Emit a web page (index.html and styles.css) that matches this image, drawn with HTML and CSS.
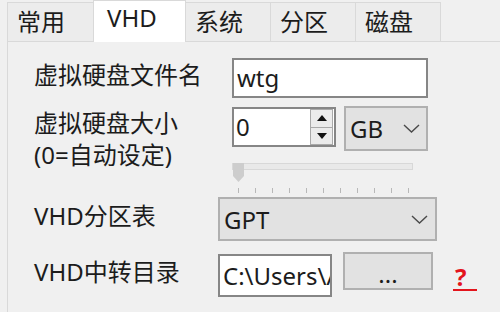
FILE: index.html
```html
<!DOCTYPE html>
<html>
<head>
<meta charset="utf-8">
<link rel="stylesheet" href="styles.css">
</head>
<body>
<div class="tabs">
  <div class="tab first">常用</div>
  <div class="tab active">VHD</div>
  <div class="tab">系统</div>
  <div class="tab">分区</div>
  <div class="tab">磁盘</div>
</div>
<div class="panel">
  <div class="group g1">
    <div class="row r1">
      <div class="label">虚拟硬盘文件名</div>
      <div class="textbox name">wtg</div>
    </div>
    <div class="row r2">
      <div class="label multi">虚拟硬盘大小<br>(0=自动设定)</div>
      <div class="ctrls">
        <div class="size-line">
          <div class="spin">
            <span class="val">0</span>
            <div class="spin-btns">
              <div class="sb"><svg width="10" height="6" viewBox="0 0 10 6"><path d="M0 6 L5 0 L10 6 Z" fill="#111"/></svg></div>
              <div class="sb"><svg width="10" height="6" viewBox="0 0 10 6"><path d="M0 0 L5 6 L10 0 Z" fill="#111"/></svg></div>
            </div>
          </div>
          <div class="combo unit">
            <span>GB</span>
            <svg class="chev" width="17" height="9" viewBox="0 0 17 9"><polyline points="1,1 8.5,8 16,1" fill="none" stroke="#4a4a4a" stroke-width="1.4"/></svg>
          </div>
        </div>
        <div class="slider">
          <div class="slider-body">
            <div class="track"></div>
            <svg class="thumb" width="11" height="19" viewBox="0 0 11 19"><path d="M0 0 H11 V13 L5.5 19 L0 13 Z" fill="#cdcdcd"/></svg>
          </div>
          <div class="ticks">
            <i></i><i></i><i></i><i></i><i></i><i></i><i></i><i></i><i></i><i></i><i></i>
          </div>
        </div>
      </div>
    </div>
  </div>
  <div class="group g2">
    <div class="row r3">
      <div class="label">VHD分区表</div>
      <div class="combo scheme">
        <span>GPT</span>
        <svg class="chev" width="17" height="9" viewBox="0 0 17 9"><polyline points="1,1 8.5,8 16,1" fill="none" stroke="#4a4a4a" stroke-width="1.4"/></svg>
      </div>
    </div>
    <div class="row r4">
      <div class="label">VHD中转目录</div>
      <div class="textbox path">C:\Users\Admin\AppData\Local\Temp</div>
      <div class="button">...</div>
      <a class="help">?</a>
    </div>
  </div>
</div>
</body>
</html>
```
FILE: styles.css
```css
* { box-sizing: border-box; }
html, body { margin: 0; padding: 0; }
body {
  width: 500px;
  height: 312px;
  overflow: hidden;
  background: #f0f0f0;
  font-family: "Noto Sans", "Noto Sans CJK SC", sans-serif;
  font-size: 24px;
  color: #1c1c1c;
}

/* tabs */
.tabs {
  display: flex;
  align-items: flex-end;
  height: 41px;
  padding-left: 7px;
  position: relative;
  z-index: 1;
}
.tab {
  width: 86px;
  height: 39px;
  margin-left: -1px;
  border: 1px solid #d9d9d9;
  border-bottom: none;
  background: #ececec;
  padding-left: 9px;
  line-height: 38px;
  white-space: nowrap;
}
.tab.first { margin-left: 0; width: 87px; }
.tab.active {
  width: 93px;
  height: 42px;
  margin-bottom: -1px;
  background: #ffffff;
  padding-left: 13px;
  line-height: 34px;
  position: relative;
  z-index: 2;
}

/* panel */
.panel {
  margin-left: 7px;
  height: 271px;
  border-top: 1px solid #d9d9d9;
  border-left: 1px solid #d9d9d9;
  background: #f0f0f0;
  padding: 16px 0 0 26px;
}
.row { display: flex; }
.label { white-space: nowrap; line-height: 32px; }

.g1 .label { width: 198px; flex: none; }
.g2 .label { width: 184px; flex: none; }

.r1 { align-items: center; }
.r1 .label { padding-bottom: 6px; }

.textbox {
  background: #fff;
  border: 2px solid #868686;
  padding-left: 3px;
  white-space: nowrap;
  overflow: hidden;
}
.textbox.name { width: 196px; height: 40px; line-height: 36px; }

.r2 { margin-top: 8px; align-items: flex-start; }
.r2 .label { padding-top: 1px; }
.ctrls { display: flex; flex-direction: column; }
.size-line { display: flex; align-items: flex-start; height: 45px; }

.spin {
  display: flex;
  width: 104px;
  height: 40px;
  margin-top: 1px;
  background: #fff;
  border: 2px solid #868686;
}
.spin .val { flex: 1; padding-left: 2px; line-height: 36px; }
.spin-btns {
  display: flex;
  flex-direction: column;
  width: 23px;
  margin-right: 1px;
}
.sb {
  flex: 1;
  display: flex;
  align-items: center;
  justify-content: center;
  background: #ebebeb;
  border: 1px solid #a9a9a9;
}
.sb + .sb { border-top: none; }

.combo {
  display: flex;
  align-items: center;
  justify-content: space-between;
  background: #e2e2e2;
  border: 2px solid #b0b0b0;
  white-space: nowrap;
}
.combo.unit {
  width: 84px;
  height: 45px;
  margin-left: 8px;
  padding: 0 6px 0 4px;
}
.combo.scheme {
  width: 219px;
  height: 44px;
  padding: 0 7px 0 4px;
}

/* slider */
.slider { padding-top: 6px; }
.slider-body { position: relative; height: 19px; width: 181px; }
.track {
  margin-top: 6px;
  height: 7px;
  width: 181px;
  background: #e9e9e9;
  border: 1px solid #d8d8d8;
}
.thumb { position: absolute; left: 1px; top: 0; }
.ticks {
  display: flex;
  gap: 16px;
  margin-top: 6px;
  padding-left: 6px;
  height: 5px;
}
.ticks i { display: block; width: 1px; height: 5px; background: #b8b8b8; }

/* group 2 */
.r3 { margin-top: 4px; align-items: center; }
.r3 .label { padding-bottom: 7px; }

.r4 { margin-top: 11px; align-items: flex-start; }
.r4 .label { margin-top: 4px; }
.textbox.path {
  width: 114px;
  height: 43px;
  margin-top: 2px;
  line-height: 39px;
}
.button {
  width: 90px;
  height: 38px;
  margin-left: 11px;
  background: #e2e2e2;
  border: 2px solid #b0b0b0;
  text-align: center;
  line-height: 34px;
  padding-top: 3px;
}
.help {
  display: inline-block;
  width: 24px;
  margin-left: 20px;
  margin-top: 13px;
  padding-left: 2px;
  line-height: 24px;
  font-weight: bold;
  color: #e3141c;
  border-bottom: 2px solid #e3141c;
}
```
